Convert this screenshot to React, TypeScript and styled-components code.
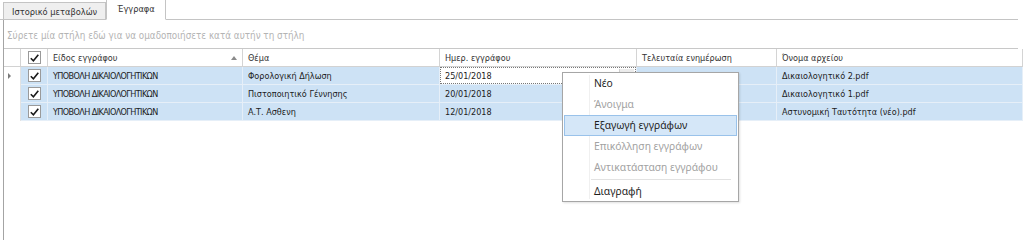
import React from "react";
import styled, { createGlobalStyle, css } from "styled-components";

const GlobalStyle = createGlobalStyle`
  html, body { margin: 0; padding: 0; background: #ffffff; }
  body { font-family: "DejaVu Sans Condensed", "DejaVu Sans", sans-serif; }
  * { box-sizing: border-box; }
`;

const GRID_FONT = `"DejaVu Sans Condensed", "DejaVu Sans", sans-serif`;
const MENU_FONT = `"Noto Sans", "Open Sans", sans-serif`;
const COLS = "17px 27px 195px 197px 197px 140px 1fr";

const Root = styled.div`
  position: relative;
  width: 1023px;
  height: 240px;
  overflow: hidden;
  background: #fff;
  font-family: ${GRID_FONT};
  font-size: 9px;
  color: #222;
`;

const TabStrip = styled.div`
  display: flex;
  align-items: flex-end;
  height: 20px;
  padding-left: 3px;
  margin-right: 5px;
  border-bottom: 1px solid #c4c4c4;
`;

const Tab = styled.div<{ $active?: boolean }>`
  display: flex;
  align-items: center;
  font-size: 9.2px;
  color: #333;
  border: 1px solid #c4c4c4;
  ${(p) =>
    p.$active
      ? css`
          height: 21px;
          margin-bottom: -1px;
          padding: 0 10px 2px 10px;
          background: #fff;
          border-bottom-color: #fff;
          margin-left: 0;
        `
      : css`
          height: 18px;
          margin-bottom: -1px;
          padding: 0 8px 0 8px;
          background: #efefef;
        `}
`;

const Panel = styled.div`
  border-left: 1px solid #a4a4a4;
  margin-left: 3px;
  height: 220px;
`;

const GroupPanel = styled.div`
  display: flex;
  align-items: center;
  height: 29px;
  padding: 2px 0 0 3px;
  font-size: 9.8px;
  color: #b4b4b4;
  border-bottom: 1px solid #c8c8c8;
  margin-right: 5px;
`;

const HeaderRow = styled.div`
  display: grid;
  grid-template-columns: ${COLS};
  height: 18px;
  border-bottom: 1px solid #d2d2d2;
`;

const HeaderCell = styled.div<{ $center?: boolean }>`
  position: relative;
  display: flex;
  align-items: center;
  justify-content: ${(p) => (p.$center ? "center" : "flex-start")};
  padding-left: ${(p) => (p.$center ? "0" : "5px")};
  border-right: 1px solid #d4d4d4;
  color: #333;
  white-space: nowrap;
`;

const SortArrow = styled.span`
  position: absolute;
  right: 5px;
  top: 7px;
  width: 0;
  height: 0;
  border-left: 3px solid transparent;
  border-right: 3px solid transparent;
  border-bottom: 4px solid #8a8a8a;
`;

const DataRow = styled.div`
  display: grid;
  grid-template-columns: ${COLS};
  height: 18px;
`;

const Cell = styled.div<{ $kind?: "indicator" | "check" | "text"; $caps?: boolean }>`
  position: relative;
  display: flex;
  align-items: center;
  white-space: nowrap;
  overflow: hidden;
  letter-spacing: ${(p) => (p.$caps ? "-0.6px" : "normal")};
  ${(p) =>
    p.$kind === "indicator"
      ? css`
          background: #fff;
          border-right: 1px solid #e2e2e2;
          padding-left: 4px;
        `
      : p.$kind === "check"
      ? css`
          justify-content: center;
          background: #cde2f5;
          border-right: 1px solid #e6eff8;
          border-bottom: 1px solid #e6eff8;
        `
      : css`
          padding-left: 5px;
          background: #cde2f5;
          border-right: 1px solid #e6eff8;
          border-bottom: 1px solid #e6eff8;
          color: #1c1c1c;
        `}
`;

const RowPointer = styled.span`
  width: 0;
  height: 0;
  border-top: 3px solid transparent;
  border-bottom: 3px solid transparent;
  border-left: 3px solid #7a7a7a;
`;

const Editor = styled.div`
  position: absolute;
  inset: 0 0 0 0;
  display: flex;
  align-items: center;
  background: #fff;
  border: 1px dotted #777;
  padding-left: 4px;
`;

const EditorButton = styled.span`
  position: absolute;
  right: 1px;
  top: 1px;
  bottom: 1px;
  width: 15px;
  background: #ececec;
  border-left: 1px solid #cfcfcf;
`;

const CheckBoxBox = styled.span`
  display: inline-flex;
  align-items: center;
  justify-content: center;
  width: 13px;
  height: 13px;
  background: #fff;
  border: 1px solid #9a9a9a;
`;

const Menu = styled.div`
  position: absolute;
  left: 562px;
  top: 72px;
  width: 177px;
  height: 130px;
  background: #fff;
  border: 1px solid #a6a6a6;
  box-shadow: 1px 1px 2px rgba(0, 0, 0, 0.12);
  font-family: ${MENU_FONT};
  font-size: 10.3px;
  padding: 0 1px;
  display: flex;
  flex-direction: column;
`;

const Gutter = styled.span`
  position: absolute;
  left: 26px;
  top: 2px;
  bottom: 2px;
  width: 1px;
  background: #f0f0f0;
`;

const MenuItem = styled.div<{ $disabled?: boolean; $hot?: boolean }>`
  position: relative;
  display: flex;
  align-items: center;
  height: 21px;
  padding-left: 29px;
  color: ${(p) => (p.$disabled ? "#a2a2a2" : "#1e1e1e")};
  border: 1px solid transparent;
  ${(p) =>
    p.$hot &&
    css`
      background: #d5e7f8;
      border-color: #99c2ea;
    `}
`;

const MenuSeparator = styled.div`
  height: 3px;
  margin: 0 6px 0 27px;
  border-bottom: 1px solid #e2e2e2;
`;

const Check = () => (
  <CheckBoxBox>
    <svg width="9" height="8" viewBox="0 0 9 8">
      <path d="M0.8 4.2 L3.4 6.8 L8.3 0.8" fill="none" stroke="#1a1a1a" strokeWidth="1.6" />
    </svg>
  </CheckBoxBox>
);

const rows = [
  {
    type: "ΥΠΟΒΟΛΗ ΔΙΚΑΙΟΛΟΓΗΤΙΚΩΝ",
    subject: "Φορολογική Δήλωση",
    date: "25/01/2018",
    updated: "25/01/2018 10:21",
    file: "Δικαιολογητικό 2.pdf",
  },
  {
    type: "ΥΠΟΒΟΛΗ ΔΙΚΑΙΟΛΟΓΗΤΙΚΩΝ",
    subject: "Πιστοποιητικό Γέννησης",
    date: "20/01/2018",
    updated: "20/01/2018 09:12",
    file: "Δικαιολογητικό 1.pdf",
  },
  {
    type: "ΥΠΟΒΟΛΗ ΔΙΚΑΙΟΛΟΓΗΤΙΚΩΝ",
    subject: "Α.Τ. Ασθενη",
    date: "12/01/2018",
    updated: "12/01/2018 11:40",
    file: "Αστυνομική Ταυτότητα (νέο).pdf",
  },
];

const menuItems: { label: string; disabled?: boolean; hot?: boolean; sepBefore?: boolean }[] = [
  { label: "Νέο" },
  { label: "Άνοιγμα", disabled: true },
  { label: "Εξαγωγή εγγράφων", hot: true },
  { label: "Επικόλληση εγγράφων", disabled: true },
  { label: "Αντικατάσταση εγγράφου", disabled: true },
  { label: "Διαγραφή", sepBefore: true },
];

export default function App() {
  return (
    <Root>
      <GlobalStyle />
      <TabStrip>
        <Tab>Ιστορικό μεταβολών</Tab>
        <Tab $active>Έγγραφα</Tab>
      </TabStrip>
      <Panel>
        <GroupPanel>Σύρετε μία στήλη εδώ για να ομαδοποιήσετε κατά αυτήν τη στήλη</GroupPanel>
        <HeaderRow>
          <HeaderCell />
          <HeaderCell $center>
            <Check />
          </HeaderCell>
          <HeaderCell>
            Είδος εγγράφου
            <SortArrow />
          </HeaderCell>
          <HeaderCell>Θέμα</HeaderCell>
          <HeaderCell>Ημερ. εγγράφου</HeaderCell>
          <HeaderCell>Τελευταία ενημέρωση</HeaderCell>
          <HeaderCell>Όνομα αρχείου</HeaderCell>
        </HeaderRow>
        {rows.map((r, i) => (
          <DataRow key={i}>
            <Cell $kind="indicator">{i === 0 && <RowPointer />}</Cell>
            <Cell $kind="check">
              <Check />
            </Cell>
            <Cell $caps>{r.type}</Cell>
            <Cell>{r.subject}</Cell>
            <Cell>
              {i === 0 ? (
                <Editor>
                  {r.date}
                  <EditorButton />
                </Editor>
              ) : (
                r.date
              )}
            </Cell>
            <Cell>{r.updated}</Cell>
            <Cell>{r.file}</Cell>
          </DataRow>
        ))}
      </Panel>
      <Menu>
        <Gutter />
        {menuItems.map((m) => (
          <React.Fragment key={m.label}>
            {m.sepBefore && <MenuSeparator />}
            <MenuItem $disabled={m.disabled} $hot={m.hot}>
              {m.label}
            </MenuItem>
          </React.Fragment>
        ))}
      </Menu>
    </Root>
  );
}
